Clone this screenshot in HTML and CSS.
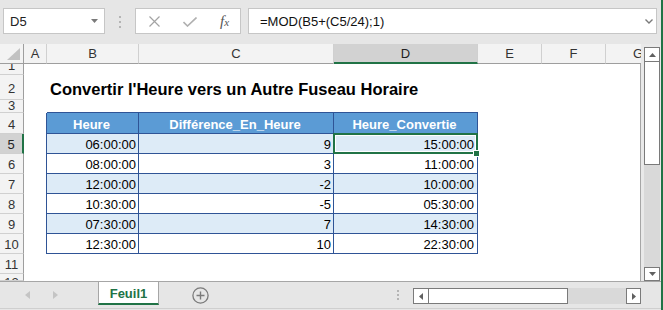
FILE: index.html
```html
<!DOCTYPE html>
<html lang="fr">
<head>
<meta charset="utf-8">
<title>Feuil1</title>
<link rel="stylesheet" href="styles.css">
</head>
<body>
<div class="app">

  <!-- barre de formule -->
  <div class="fbar">
    <div class="namebox">
      <span>D5</span>
      <svg width="7" height="4"><polygon points="0,0 7,0 3.5,4" fill="#7a7a7a"/></svg>
    </div>
    <div class="grip"><i></i><i></i><i></i></div>
    <div class="fbtns">
      <svg class="ico-x" width="11" height="11"><path d="M0.5 0.5 L10.5 10.5 M10.5 0.5 L0.5 10.5" stroke="#a3a3a3" stroke-width="1.2"/></svg>
      <svg class="ico-ok" width="14" height="10"><path d="M0.5 5 L4.5 9 L13.5 0.5" fill="none" stroke="#b0b0b0" stroke-width="1.6"/></svg>
      <span class="fx">f<span>x</span></span>
    </div>
    <div class="finput">
      <span>=MOD(B5+(C5/24);1)</span>
      <svg width="8" height="5"><path d="M0.5 0.5 L4 4 L7.5 0.5" fill="none" stroke="#7a7a7a" stroke-width="1.4"/></svg>
    </div>
  </div>

  <div class="work">
    <div class="sheet">
      <!-- en-tetes de colonnes -->
      <div class="corner"><svg width="13" height="12"><polygon points="13,0 13,12 0,12" fill="#c2c2c2"/></svg></div>
      <div class="ch">A</div>
      <div class="ch">B</div>
      <div class="ch">C</div>
      <div class="ch sel">D</div>
      <div class="ch">E</div>
      <div class="ch">F</div>
      <div class="ch cut">G</div>

      <!-- ligne 1 -->
      <div class="rh">1</div>
      <div class="span7 last"></div>

      <!-- ligne 2 -->
      <div class="rh r2">2</div>
      <div></div>
      <div class="title span6 last">Convertir l'Heure vers un Autre Fuseau Horaire</div>

      <!-- ligne 3 -->
      <div class="rh r3">3</div>
      <div></div>
      <div class="span3 ttop"></div>
      <div class="span3 last"></div>

      <!-- ligne 4 -->
      <div class="rh">4</div>
      <div class="tl"></div>
      <div class="t th">Heure</div>
      <div class="t th">Différence_En_Heure</div>
      <div class="t th">Heure_Convertie</div>
      <div class="span3 last"></div>

      <!-- lignes 5 a 10 -->
      <div class="rh sel">5</div>
      <div class="tl"></div>
      <div class="t band">06:00:00</div>
      <div class="t band">9</div>
      <div class="t td band active">15:00:00<div class="selbox"><div class="handle"></div></div></div>
      <div class="span3 last"></div>

      <div class="rh">6</div>
      <div class="tl"></div>
      <div class="t">08:00:00</div>
      <div class="t">3</div>
      <div class="t td">11:00:00</div>
      <div class="span3 last"></div>

      <div class="rh">7</div>
      <div class="tl"></div>
      <div class="t band">12:00:00</div>
      <div class="t band">-2</div>
      <div class="t td band">10:00:00</div>
      <div class="span3 last"></div>

      <div class="rh">8</div>
      <div class="tl"></div>
      <div class="t">10:30:00</div>
      <div class="t">-5</div>
      <div class="t td">05:30:00</div>
      <div class="span3 last"></div>

      <div class="rh">9</div>
      <div class="tl"></div>
      <div class="t band">07:30:00</div>
      <div class="t band">7</div>
      <div class="t td band">14:30:00</div>
      <div class="span3 last"></div>

      <div class="rh">10</div>
      <div class="tl"></div>
      <div class="t">12:30:00</div>
      <div class="t">10</div>
      <div class="t td">22:30:00</div>
      <div class="span3 last"></div>

      <!-- lignes 11, 12 -->
      <div class="rh">11</div>
      <div class="span7 last"></div>
      <div class="rh r12">12</div>
      <div class="span7 last"></div>
    </div>

    <div class="vscroll">
      <div class="vbtn"><svg width="7" height="4"><polygon points="0,4 7,4 3.5,0" fill="#606060"/></svg></div>
      <div class="vthumb"></div>
      <div class="vtrack"></div>
      <div class="vbtn down"><svg width="7" height="4"><polygon points="0,0 7,0 3.5,4" fill="#606060"/></svg></div>
    </div>
  </div>

  <!-- onglets -->
  <div class="tabbar">
    <div class="nav">
      <svg width="5" height="8"><polygon points="5,0 5,8 0,4" fill="#c4c4c4"/></svg>
      <svg class="next" width="5" height="8"><polygon points="0,0 0,8 5,4" fill="#c4c4c4"/></svg>
    </div>
    <div class="tab">Feuil1</div>
    <div class="add">
      <svg width="17" height="17"><circle cx="8.5" cy="8.5" r="7.6" fill="none" stroke="#7a7a7a" stroke-width="1.3"/><path d="M8.5 4.5 V12.5 M4.5 8.5 H12.5" stroke="#7a7a7a" stroke-width="1.4"/></svg>
    </div>
    <div class="spacer"></div>
    <div class="hgrip"><i></i><i></i><i></i></div>
    <div class="hscroll">
      <div class="sbtn"><svg width="4" height="7"><polygon points="4,0 4,7 0,3.5" fill="#606060"/></svg></div>
      <div class="hthumb"></div>
      <div class="htrack"></div>
      <div class="sbtn right"><svg width="4" height="7"><polygon points="0,0 0,7 4,3.5" fill="#606060"/></svg></div>
    </div>
    <div class="tail"></div>
  </div>

</div>
</body>
</html>
```

FILE: styles.css
```css
* {
	box-sizing: border-box;
}

body {
	margin: 0;
	font-family: "Liberation Sans", Arial, sans-serif;
	font-size: 13px;
	color: #000;
}

.app {
	width: 663px;
	height: 310px;
	background: #e6e6e6;
	border-right: 2px solid #217346;
	display: flex;
	flex-direction: column;
	overflow: hidden;
}

/* barre de formule */
.fbar {
	height: 44px;
	flex: none;
	display: flex;
	align-items: flex-start;
	padding: 8px 0 0 3px;
}

.namebox {
	width: 102px;
	height: 26px;
	background: #fff;
	border: 1px solid #c6c6c6;
	display: flex;
	align-items: center;
	justify-content: space-between;
	padding: 0 6px;
	color: #222;
}

.grip {
	width: 30px;
	height: 26px;
	display: flex;
	flex-direction: column;
	align-items: center;
	justify-content: center;
	gap: 3px;
	padding-top: 2px;
}

.grip i, .hgrip i {
	display: block;
	width: 2px;
	height: 2px;
	background: #b4b4b4;
}

.fbtns {
	width: 106px;
	height: 26px;
	background: #fff;
	border: 1px solid #c6c6c6;
	display: flex;
	align-items: center;
	padding-left: 13px;
}

.ico-ok {
	margin-left: 23px;
	margin-top: 2px;
}

.fx {
	margin-left: 23px;
	font-family: "Liberation Serif", "Times New Roman", serif;
	font-style: italic;
	font-size: 15px;
	color: #555;
}

.fx span {
	font-size: 11px;
}

.finput {
	width: 409px;
	height: 26px;
	margin-left: 7px;
	background: #fff;
	border: 1px solid #c6c6c6;
	display: flex;
	align-items: center;
	justify-content: space-between;
	padding: 0 3px 0 11px;
	color: #111;
}

/* feuille */
.work {
	height: 237px;
	flex: none;
	display: flex;
}

.sheet {
	width: 641px;
	display: grid;
	grid-template-columns: 24px 23px 92px 195px 144px 64px 64px 35px;
	grid-template-rows: 20px 11px 25px 13px 21px repeat(7, 20px) 7px;
	background: #fff;
}

.sheet > div {
	display: flex;
	align-items: flex-end;
	overflow: hidden;
	white-space: nowrap;
	line-height: 15px;
	padding-bottom: 1px;
}

.corner {
	background: #f3f3f3;
	border-right: 1px solid #9e9e9e;
	border-bottom: 1px solid #9e9e9e;
	justify-content: flex-end;
	padding: 0 3px 3px 0;
}

.sheet > .corner {
	padding-bottom: 3px;
}

.ch {
	background: #f3f3f3;
	border-right: 1px solid #d0d0d0;
	border-bottom: 1px solid #9e9e9e;
	justify-content: center;
	color: #333;
}

.sheet > .ch {
	padding-bottom: 2px;
}

.sheet > .ch.sel {
	background: #d2d2d2;
	border-bottom: 2px solid #217346;
	padding-bottom: 1px;
	color: #222;
}

.sheet > .ch.cut {
	border-right: none;
	justify-content: flex-start;
	padding-left: 27px;
}

.rh {
	background: #f3f3f3;
	border-right: 1px solid #9e9e9e;
	border-bottom: 1px solid #d0d0d0;
	justify-content: center;
	color: #333;
}

.rh.sel {
	background: #d2d2d2;
	border-right: 2px solid #217346;
	color: #222;
}

.sheet > .r2 {
	padding-bottom: 3px;
}

.sheet > .r3 {
	line-height: 12px;
	padding-bottom: 0;
}

.sheet > .r12 {
	align-items: flex-start;
	padding-top: 1px;
}

.span7 { grid-column: span 7; }
.span6 { grid-column: span 6; }
.span3 { grid-column: span 3; }

.last {
	border-right: 1px solid #a6a6a6;
}

.title {
	font-size: 16.5px;
	font-weight: bold;
	line-height: 20px;
	padding-left: 3px;
}

.sheet > .title {
	line-height: 20px;
}

.ttop {
	border-bottom: 1px solid #2f5496;
}

.tl {
	border-right: 1px solid #2f5496;
}

.t {
	border-right: 1px solid #2f5496;
	border-bottom: 1px solid #2f5496;
	justify-content: flex-end;
	padding-right: 2px;
}

.td {
	padding-right: 3px;
}

.th {
	background: #5b9bd5;
	color: #fff;
	font-weight: bold;
	justify-content: center;
}

.band {
	background: #ddebf7;
}

.sheet > .active {
	position: relative;
	overflow: visible;
}

.selbox {
	position: absolute;
	left: -1px;
	top: -1px;
	right: -1px;
	bottom: -1px;
	border: 2px solid #217346;
	box-shadow: inset 0 0 0 1px #fff;
}

.handle {
	position: absolute;
	right: -4px;
	bottom: -5px;
	width: 7px;
	height: 7px;
	background: #217346;
	border: 1px solid #fff;
}

/* barre de defilement verticale */
.vscroll {
	width: 20px;
	display: flex;
	flex-direction: column;
	padding: 3px 1px 0 3px;
	background: #e9e9e9;
}

.vbtn {
	height: 15px;
	background: #fff;
	border: 1px solid #7a7a7a;
	display: flex;
	align-items: center;
	justify-content: center;
}

.vbtn.down {
	height: 14px;
}

.vthumb {
	height: 103px;
	background: #fff;
	border: 1px solid #7a7a7a;
	border-top: none;
}

.vtrack {
	flex: 1;
	background: #d9d9d9;
}

/* onglets */
.tabbar {
	height: 28px;
	flex: none;
	border-top: 1px solid #a6a6a6;
	border-bottom: 1px solid #cfcfcf;
	display: flex;
	align-items: flex-start;
}

.nav {
	width: 98px;
	height: 26px;
	display: flex;
	align-items: center;
	padding-left: 25px;
}

.nav .next {
	margin-left: 23px;
}

.tab {
	width: 61px;
	height: 23px;
	background: #fff;
	border-left: 1px solid #a6a6a6;
	border-right: 1px solid #a6a6a6;
	border-bottom: 2px solid #217346;
	color: #217346;
	font-weight: bold;
	display: flex;
	align-items: center;
	justify-content: center;
	padding-top: 1px;
}

.add {
	width: 83px;
	height: 26px;
	display: flex;
	align-items: center;
	justify-content: center;
}

.spacer {
	flex: 1;
}

.hgrip {
	width: 2px;
	margin: 8px 14px 0 0;
	display: flex;
	flex-direction: column;
	gap: 2px;
}

.hscroll {
	width: 228px;
	height: 16px;
	margin-top: 6px;
	display: flex;
}

.sbtn {
	width: 16px;
	height: 16px;
	background: #fff;
	border: 1px solid #7a7a7a;
	display: flex;
	align-items: center;
	justify-content: center;
}

.sbtn.right {
	width: 15px;
}

.hthumb {
	width: 139px;
	background: #fff;
	border: 1px solid #7a7a7a;
	border-left: none;
}

.htrack {
	flex: 1;
	background: #d9d9d9;
}

.tail {
	width: 20px;
}
```
